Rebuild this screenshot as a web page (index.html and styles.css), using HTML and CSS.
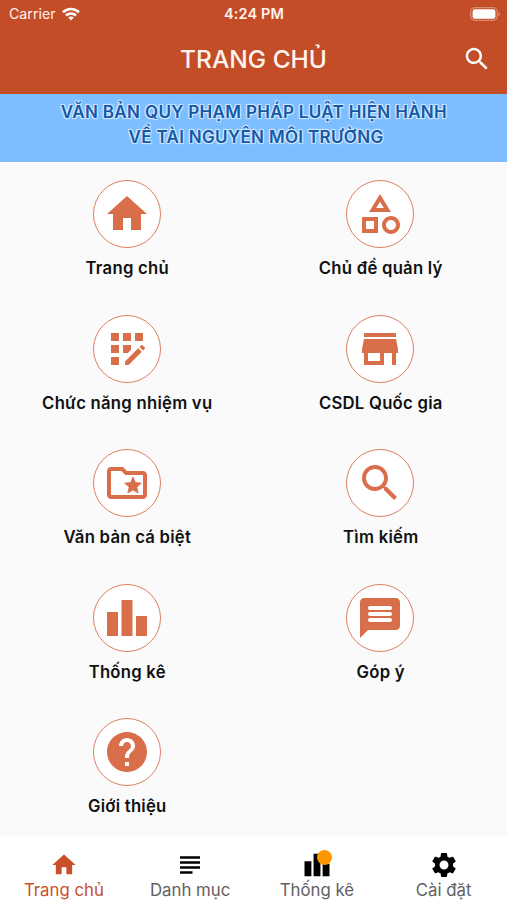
FILE: index.html
```html
<!DOCTYPE html>
<html lang="vi">
<head>
	<meta charset="utf-8">
	<title>Trang chủ</title>
	<link rel="stylesheet" href="styles.css">
</head>
<body>
	<header class="header">
		<div class="status">
			<div class="carrier">
				<span>Carrier</span>
				<svg class="wifi" viewBox="0 0 18 14" fill="none" stroke="#fff" stroke-width="2.7">
					<path d="M1 5.2C5.6.9 12.4.9 17 5.2"/>
					<path d="M4 8.6c2.9-2.6 7.1-2.6 10 0"/>
					<path d="M9 13.6l-2.8-3c1.6-1.4 4-1.4 5.6 0z" fill="#fff" stroke="none"/>
				</svg>
			</div>
			<div class="time">4:24 PM</div>
			<svg class="battery" viewBox="0 0 31 14">
				<rect x=".7" y=".7" width="26.6" height="12.6" rx="4" fill="none" stroke="#d98d74" stroke-width="1.2"/>
				<rect x="2.6" y="2.2" width="22.8" height="9.6" rx="2.2" fill="#fff"/>
				<path d="M28.6 4.8c1.8.8 1.8 3.6 0 4.4z" fill="#d98d74"/>
			</svg>
		</div>
		<div class="appbar">
			<h1 class="title">TRANG CHỦ</h1>
			<svg class="search" viewBox="0 0 24 24"><path d="M15.5 14h-.79l-.28-.27C15.41 12.59 16 11.11 16 9.5 16 5.91 13.09 3 9.5 3S3 5.91 3 9.5 5.91 16 9.5 16c1.61 0 3.09-.59 4.23-1.57l.27.28v.79l5 4.99L20.49 19l-4.99-5zm-6 0C7.01 14 5 11.99 5 9.5S7.01 5 9.5 5 14 7.01 14 9.5 11.99 14 9.5 14z"/></svg>
		</div>
	</header>

	<div class="banner">
		<div>VĂN BẢN QUY PHẠM PHÁP LUẬT HIỆN HÀNH</div>
		<div class="line2">VỀ TÀI NGUYÊN MÔI TRƯỜNG</div>
	</div>

	<main class="menu">
		<div class="item">
			<div class="circle"><svg viewBox="0 0 24 24"><path d="M10 20v-6h4v6h5v-8h3L12 3 2 12h3v8z"/></svg></div>
			<div class="label">Trang chủ</div>
		</div>
		<div class="item">
			<div class="circle"><svg viewBox="0 0 24 24"><path d="M12 2l-5.5 9h11L12 2zm0 3.84L13.93 9h-3.87L12 5.84zM17.5 13c-2.49 0-4.5 2.01-4.5 4.5s2.01 4.5 4.5 4.5 4.5-2.01 4.5-4.5-2.01-4.5-4.5-4.5zm0 7c-1.38 0-2.5-1.12-2.5-2.5s1.12-2.5 2.5-2.5 2.5 1.12 2.5 2.5-1.12 2.5-2.5 2.5zM3 21.5h8v-8H3v8zm2-6h4v4H5v-4z"/></svg></div>
			<div class="label">Chủ đề quản lý</div>
		</div>
		<div class="item">
			<div class="circle"><svg viewBox="0 0 24 24"><path d="M4 4h4v4H4zM10 4h4v4h-4zM16 4h4v4h-4zM4 10h4v4H4zM4 16h4v4H4zM14 10v2.4L12.4 14H10v-4z"/><path d="M11 20v-1.8l6.6-6.6 1.8 1.8-6.2 6.2c-.3.3-.6.4-1 .4zM18.2 11l.8-.8c.3-.3.6-.3.9 0l.9.9c.3.3.3.6 0 .9l-.8.8z"/></svg></div>
			<div class="label">Chức năng nhiệm vụ</div>
		</div>
		<div class="item">
			<div class="circle"><svg viewBox="0 0 24 24"><path d="M20 4H4v2h16V4zm1 10v-2l-1-5H4l-1 5v2h1v6h10v-6h4v6h2v-6h1zm-9 4H6v-4h6v4z"/></svg></div>
			<div class="label">CSDL Quốc gia</div>
		</div>
		<div class="item">
			<div class="circle"><svg viewBox="0 0 24 24"><path d="M20 6h-8l-2-2H4c-1.1 0-2 .9-2 2v12c0 1.1.9 2 2 2h16c1.1 0 2-.9 2-2V8c0-1.1-.9-2-2-2zm0 12H4V6h5.17l2 2H20v10z"/><path d="M13.08 14.04L12.39 17 15 15.47 17.61 17l-.69-2.96 2.3-1.99-3.03-.26L15 9l-1.19 2.79-3.03.26z" stroke="#d96e4a" stroke-width=".4"/></svg></div>
			<div class="label">Văn bản cá biệt</div>
		</div>
		<div class="item">
			<div class="circle"><svg viewBox="0 0 24 24"><path d="M15.5 14h-.79l-.28-.27C15.41 12.59 16 11.11 16 9.5 16 5.91 13.09 3 9.5 3S3 5.91 3 9.5 5.91 16 9.5 16c1.61 0 3.09-.59 4.23-1.57l.27.28v.79l5 4.99L20.49 19l-4.99-5zm-6 0C7.01 14 5 11.99 5 9.5S7.01 5 9.5 5 14 7.01 14 9.5 11.99 14 9.5 14z"/></svg></div>
			<div class="label">Tìm kiếm</div>
		</div>
		<div class="item">
			<div class="circle"><svg viewBox="0 0 24 24"><path d="M7.5 21H2V9h5.5v12zm7.25-18h-5.5v18h5.5V3zM22 11h-5.5v10H22V11z"/></svg></div>
			<div class="label">Thống kê</div>
		</div>
		<div class="item">
			<div class="circle"><svg viewBox="0 0 24 24"><path d="M20 2H4c-1.1 0-2 .9-2 2v18l4-4h14c1.1 0 2-.9 2-2V4c0-1.1-.9-2-2-2z"/><path d="M7 7h10M7 10h10M7 13h10" fill="none" stroke="#fff" stroke-width="2" stroke-linecap="round"/></svg></div>
			<div class="label">Góp ý</div>
		</div>
		<div class="item">
			<div class="circle"><svg viewBox="0 0 24 24"><path d="M12 2C6.48 2 2 6.48 2 12s4.48 10 10 10 10-4.48 10-10S17.52 2 12 2zm1 17h-2v-2h2v2zm2.07-7.75l-.9.92C13.45 12.9 13 13.5 13 15h-2v-.5c0-1.1.45-2.1 1.17-2.83l1.24-1.26c.37-.36.59-.86.59-1.41 0-1.1-.9-2-2-2s-2 .9-2 2H8c0-2.21 1.79-4 4-4s4 1.79 4 4c0 .88-.36 1.68-.93 2.25z"/></svg></div>
			<div class="label">Giới thiệu</div>
		</div>
	</main>

	<nav class="tabs">
		<div class="tab active">
			<svg viewBox="0 0 24 24"><path d="M10 20v-6h4v6h5v-8h3L12 3 2 12h3v8z"/></svg>
			<span>Trang chủ</span>
		</div>
		<div class="tab">
			<svg viewBox="0 0 24 24"><path d="M14 17H4v2h10v-2zm6-8H4v2h16V9zM4 15h16v-2H4v2zM4 5v2h16V5H4z"/></svg>
			<span>Danh mục</span>
		</div>
		<div class="tab">
			<svg viewBox="0 0 24 24"><path d="M7.5 21H2V9h5.5v12zm7.25-18h-5.5v18h5.5V3zM22 11h-5.5v10H22V11z"/></svg>
			<i class="badge"></i>
			<span>Thống kê</span>
		</div>
		<div class="tab">
			<svg viewBox="0 0 24 24"><path d="M19.14 12.94c.04-.3.06-.61.06-.94 0-.32-.02-.64-.07-.94l2.03-1.58c.18-.14.23-.41.12-.61l-1.92-3.32c-.12-.22-.37-.29-.59-.22l-2.39.96c-.5-.38-1.03-.7-1.62-.94l-.36-2.54c-.04-.24-.24-.41-.48-.41h-3.84c-.24 0-.43.17-.47.41l-.36 2.54c-.59.24-1.13.57-1.62.94l-2.39-.96c-.22-.08-.47 0-.59.22L2.74 8.87c-.12.21-.08.47.12.61l2.03 1.58c-.05.3-.09.63-.09.94s.02.64.07.94l-2.03 1.58c-.18.14-.23.41-.12.61l1.92 3.32c.12.22.37.29.59.22l2.39-.96c.5.38 1.03.7 1.62.94l.36 2.54c.05.24.24.41.48.41h3.84c.24 0 .44-.17.47-.41l.36-2.54c.59-.24 1.13-.56 1.62-.94l2.39.96c.22.08.47 0 .59-.22l1.92-3.32c.12-.22.07-.47-.12-.61l-2.01-1.58zM12 15.6c-1.98 0-3.6-1.62-3.6-3.6s1.62-3.6 3.6-3.6 3.6 1.62 3.6 3.6-1.62 3.6-3.6 3.6z"/></svg>
			<span>Cài đặt</span>
		</div>
	</nav>
</body>
</html>
```
FILE: styles.css
```css
* {
	box-sizing: border-box;
}
body {
	display: flex;
	flex-direction: column;
	height: 900px;
	margin: 0;
	overflow: hidden;
	background-color: #fafafa;
	font-family: Inter, "Liberation Sans", sans-serif;
}
svg {
	display: block;
	flex: none;
}
.header {
	height: 94px;
	background-color: #c34d27;
	color: #fff3ee;
}
.status {
	display: grid;
	grid-template-columns: 1fr auto 1fr;
	align-items: center;
	height: 27px;
	padding: 0 6px 0 9px;
	font-size: 14.5px;
}
.carrier {
	display: flex;
	align-items: center;
	gap: 6px;
	font-size: 14.2px;
}
.wifi {
	width: 18px;
	height: 14px;
}
.time {
	margin-right: 2px;
	font-weight: 600;
	letter-spacing: .1px;
}
.battery {
	justify-self: end;
	width: 31px;
	height: 14px;
}
.appbar {
	display: grid;
	grid-template-columns: 1fr auto 1fr;
	align-items: center;
	height: 64px;
	padding: 0 15px;
}
.title {
	grid-column: 2;
	margin: 0;
	font-size: 24.5px;
	font-weight: 500;
	line-height: 30px;
}
.search {
	justify-self: end;
	width: 30px;
	height: 30px;
	fill: #fff;
}
.banner {
	height: 68px;
	padding: 6px 0 0 1px;
	background-color: #7cbeff;
	color: #1459a8;
	font-size: 17px;
	font-weight: 600;
	letter-spacing: .33px;
	line-height: 24.5px;
	text-align: center;
	text-shadow: 1px 1px 1px #d5eaff, -1px -1px 1px #d5eaff, 1px -1px 1px #d5eaff, -1px 1px 1px #d5eaff;
}
.line2 {
	padding-left: 4px;
}
.menu {
	display: grid;
	grid-template-columns: 1fr 1fr;
	grid-auto-rows: 134.6px;
	height: 674px;
	padding-top: 18px;
}
.item {
	display: flex;
	flex-direction: column;
	align-items: center;
}
.circle {
	display: flex;
	align-items: center;
	justify-content: center;
	width: 68px;
	height: 68px;
	border: 1.4px solid #dd7f60;
	border-radius: 50%;
	background-color: #fff;
}
.circle svg {
	width: 48px;
	height: 48px;
	fill: #d96e4a;
}
.label {
	margin-top: 8px;
	padding-left: 1px;
	color: #111;
	font-size: 16.7px;
	font-weight: 600;
	letter-spacing: .25px;
	line-height: 24px;
}
.tabs {
	display: grid;
	grid-template-columns: repeat(4, 1fr);
	height: 64px;
	background-color: #fff;
}
.tab {
	display: flex;
	position: relative;
	flex-direction: column;
	align-items: center;
	padding-top: 13.5px;
	color: #616161;
	font-size: 16.8px;
	line-height: 20px;
}
.tab svg {
	width: 30px;
	height: 30px;
	fill: #000;
}
.tab.active {
	padding-left: 1px;
	color: #c9502a;
}
.tab.active svg {
	width: 28px;
	height: 28px;
	margin: 1px;
	fill: #c9502a;
}
.badge {
	position: absolute;
	top: 14px;
	left: 50%;
	width: 15px;
	height: 15px;
	border-radius: 50%;
	background-color: #ff9800;
}
```
